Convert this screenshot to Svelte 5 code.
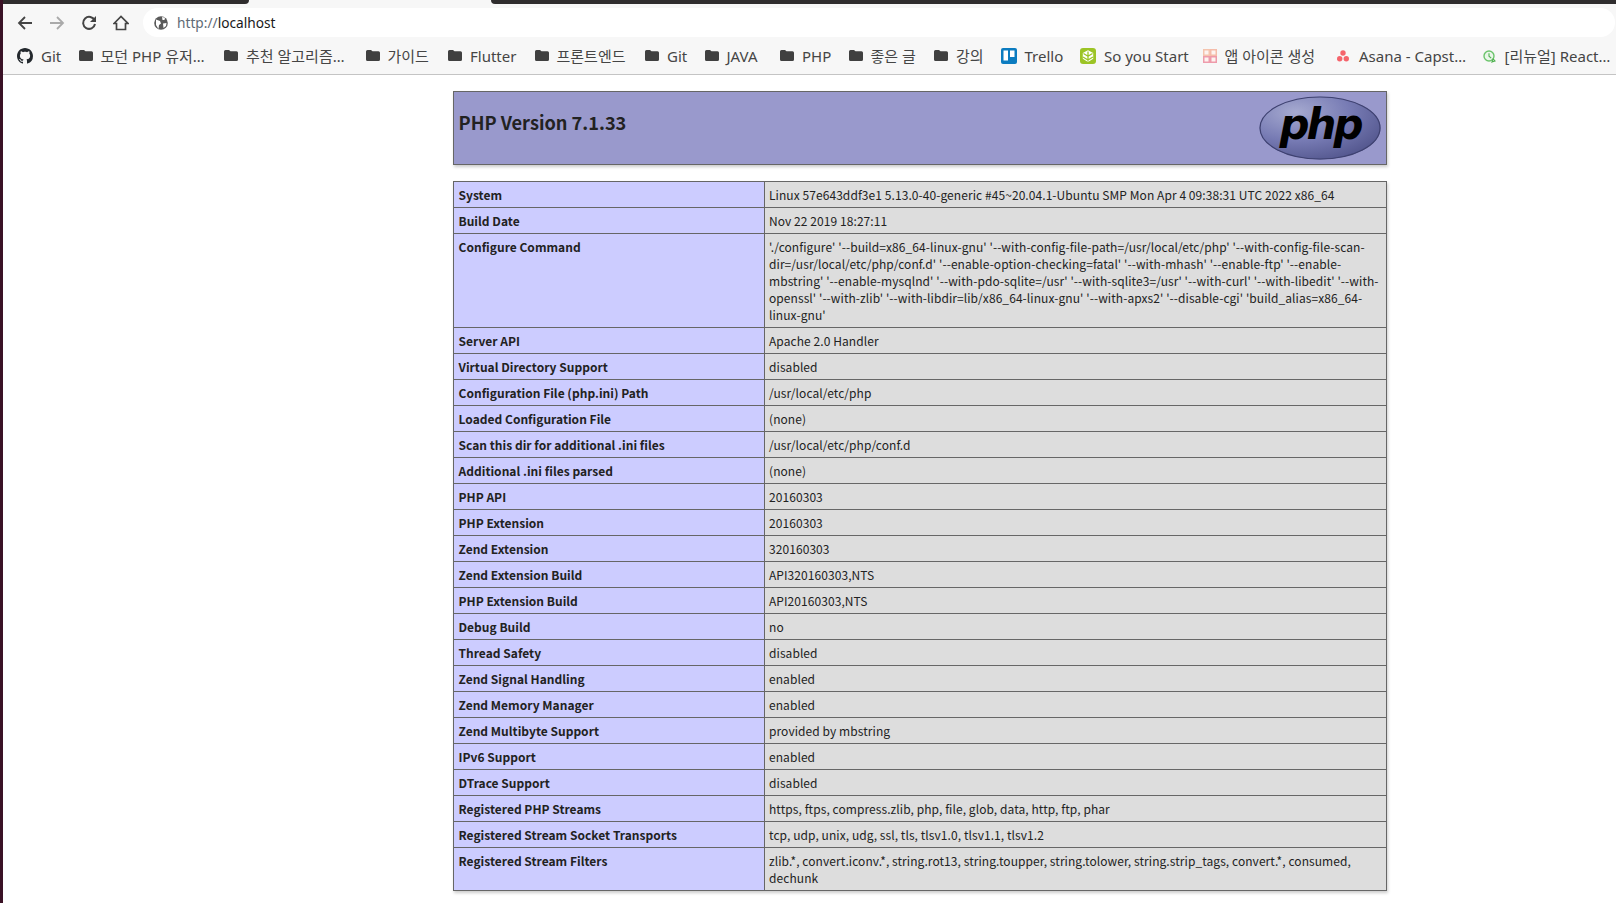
<script>
  const rows = [
    ['System', 'Linux 57e643ddf3e1 5.13.0-40-generic #45~20.04.1-Ubuntu SMP Mon Apr 4 09:38:31 UTC 2022 x86_64'],
    ['Build Date', 'Nov 22 2019 18:27:11'],
    ['Configure Command', "'./configure' '--build=x86_64-linux-gnu' '--with-config-file-path=/usr/local/etc/php' '--with-config-file-scan-dir=/usr/local/etc/php/conf.d' '--enable-option-checking=fatal' '--with-mhash' '--enable-ftp' '--enable-mbstring' '--enable-mysqlnd' '--with-pdo-sqlite=/usr' '--with-sqlite3=/usr' '--with-curl' '--with-libedit' '--with-openssl' '--with-zlib' '--with-libdir=lib/x86_64-linux-gnu' '--with-apxs2' '--disable-cgi' 'build_alias=x86_64-linux-gnu'"],
    ['Server API', 'Apache 2.0 Handler'],
    ['Virtual Directory Support', 'disabled'],
    ['Configuration File (php.ini) Path', '/usr/local/etc/php'],
    ['Loaded Configuration File', '(none)'],
    ['Scan this dir for additional .ini files', '/usr/local/etc/php/conf.d'],
    ['Additional .ini files parsed', '(none)'],
    ['PHP API', '20160303'],
    ['PHP Extension', '20160303'],
    ['Zend Extension', '320160303'],
    ['Zend Extension Build', 'API320160303,NTS'],
    ['PHP Extension Build', 'API20160303,NTS'],
    ['Debug Build', 'no'],
    ['Thread Safety', 'disabled'],
    ['Zend Signal Handling', 'enabled'],
    ['Zend Memory Manager', 'enabled'],
    ['Zend Multibyte Support', 'provided by mbstring'],
    ['IPv6 Support', 'enabled'],
    ['DTrace Support', 'disabled'],
    ['Registered PHP Streams', 'https, ftps, compress.zlib, php, file, glob, data, http, ftp, phar'],
    ['Registered Stream Socket Transports', 'tcp, udp, unix, udg, ssl, tls, tlsv1.0, tlsv1.1, tlsv1.2'],
    ['Registered Stream Filters', 'zlib.*, convert.iconv.*, string.rot13, string.toupper, string.tolower, string.strip_tags, convert.*, consumed, dechunk'],
  ];
  const bookmarks = [
    ['git', 'Git', 20], ['f', '모던 PHP 유저…', 106], ['f', '추천 알고리즘…', 102], ['f', '가이드', 43], ['f', 'Flutter', 47],
    ['f', '프론트엔드', 71], ['f', 'Git', 20], ['f', 'JAVA', 36], ['f', 'PHP', 29], ['f', '좋은 글', 46], ['f', '강의', 27],
    ['trello', 'Trello', 38], ['sys', 'So you Start', 81], ['grid', '앱 아이콘 생성', 93], ['asana', 'Asana - Capst…', 104], ['clock', '[리뉴얼] React…', 108],
  ];
</script>

<div class="window">
  <div class="tabstrip"><div class="tab-left"></div><div class="tab-active"></div><div class="tab-right"></div></div>
  <div class="toolbar">
    <div class="nav">
      <svg viewBox="0 0 16 16" width="16" height="16"><path d="M15 8H2M8 2 2 8l6 6" fill="none" stroke="#444" stroke-width="1.8"/></svg>
      <svg viewBox="0 0 16 16" width="16" height="16"><path d="M1 8h13M8 2l6 6-6 6" fill="none" stroke="#aaa" stroke-width="1.8"/></svg>
      <svg viewBox="0 0 16 16" width="16" height="16"><path d="M13.6 5.400A6 6 0 1 0 14 9" fill="none" stroke="#444" stroke-width="2"/><path d="M15 1v6H9z" fill="#444"/></svg>
      <svg viewBox="0 0 16 16" width="16" height="16"><path d="M1 8.500 8 1.500l7 7h-2.500v6h-9v-6z" fill="none" stroke="#444" stroke-width="1.700" stroke-linejoin="miter"/></svg>
    </div>
    <div class="omni">
      <svg viewBox="0 0 14 14" width="14" height="14"><circle cx="7" cy="7" r="6.800" fill="#5a5a5a"/><path d="M2 3.500 6 5l1 2.500-2 1.500-.5 4L2 9zM8 1l3 .7L10.500 4 8.500 4zM9 7.500l3.500-.5-.5 3-2.500 2z" fill="#fff"/></svg>
      <span class="url"><span class="scheme">http://</span>localhost</span>
    </div>
  </div>
  <div class="bookmarks">
    {#each bookmarks as [icon, label, w]}
      <div class="bm">
        {#if icon === 'f'}
          <svg viewBox="0 0 14 11" width="14" height="11"><path d="M0 1.500A1.500 1.500 0 0 1 1.500 0H5l1.500 1.200h6A1.500 1.500 0 0 1 14 2.700v6.800a1.500 1.500 0 0 1-1.500 1.500h-11A1.500 1.500 0 0 1 0 9.500z" fill="#404040"/></svg>
        {:else if icon === 'git'}
          <svg viewBox="0 0 16 16" width="16" height="16"><path fill="#24292e" d="M8 0C3.580 0 0 3.580 0 8c0 3.540 2.290 6.530 5.470 7.590.4.070.55-.17.55-.38 0-.19-.01-.82-.01-1.490-2.010.37-2.530-.49-2.690-.94-.09-.23-.48-.94-.82-1.130-.28-.15-.68-.52-.01-.53.63-.01 1.080.58 1.230.82.720 1.210 1.870.87 2.330.66.070-.52.280-.87.510-1.070-1.780-.2-3.640-.89-3.640-3.950 0-.87.310-1.590.820-2.150-.08-.2-.36-1.020.08-2.120 0 0 .67-.21 2.200.82.640-.18 1.320-.27 2-.27s1.360.090 2 .27c1.530-1.040 2.200-.82 2.200-.82.44 1.100.16 1.920.08 2.120.51.560.82 1.270.82 2.150 0 3.070-1.870 3.750-3.650 3.950.29.250.54.730.54 1.480 0 1.070-.01 1.930-.01 2.200 0 .21.150.46.550.38A8.010 8.010 0 0 0 16 8c0-4.420-3.580-8-8-8z"/></svg>
        {:else if icon === 'trello'}
          <svg viewBox="0 0 16 16" width="16" height="16"><rect width="16" height="16" rx="2" fill="#0c7cc0"/><rect x="2.500" y="2.500" width="4.500" height="10" fill="#fff"/><rect x="9" y="2.500" width="4.500" height="6.500" fill="#fff"/></svg>
        {:else if icon === 'sys'}
          <svg viewBox="0 0 16 16" width="16" height="16"><rect width="16" height="16" rx="3" fill="#9cc425"/><path d="M8 2.200 13.200 5v5.800L8 14 2.800 10.800V5z" fill="#fff"/><path d="M8 3.500v10M3.500 5.500 8 8.200l4.500-2.700M3 9l5 3 5-3" fill="none" stroke="#9cc425" stroke-width="1.300"/></svg>
        {:else if icon === 'grid'}
          <svg viewBox="0 0 14 14" width="14" height="14"><g fill="#fdf3f0" stroke-width="1.500"><rect x=".75" y=".75" width="5.500" height="5.500" stroke="#f5c4ae"/><rect x="7.750" y=".75" width="5.500" height="5.500" stroke="#f5bcaa"/><rect x=".75" y="7.750" width="5.500" height="5.500" stroke="#ee9cac"/><rect x="7.750" y="7.750" width="5.500" height="5.500" stroke="#ee9aaa"/></g></svg>
        {:else if icon === 'asana'}
          <svg viewBox="0 0 16 16" width="16" height="16"><g fill="#f5646c"><circle cx="8" cy="5" r="2.700"/><circle cx="4.700" cy="10.700" r="2.700"/><circle cx="11.300" cy="10.700" r="2.700"/></g></svg>
        {:else}
          <svg viewBox="0 0 16 16" width="16" height="16"><circle cx="8" cy="8" r="5" fill="#e9f6e9" stroke="#6cc46c" stroke-width="1.400"/><path d="M8 5.200v3l2.200 2M11 14l3-1-1.800-2z" fill="none" stroke="#4fb14f" stroke-width="1.100"/></svg>
        {/if}
        <span class="label" style="width:{w}px">{label}</span>
      </div>
    {/each}
  </div>
  <main>
    <table class="head">
      <tbody>
        <tr><td class="h">
          <svg class="logo" viewBox="0 0 122 64" width="122" height="64">
            <defs>
              <radialGradient id="lg" cx="0.3" cy="0.25" r="0.9"><stop offset="0" stop-color="#a6aad0"/><stop offset="0.5" stop-color="#777bb4"/><stop offset="1" stop-color="#4c4f86"/></radialGradient>
            </defs>
            <ellipse cx="61" cy="32" rx="60.500" ry="31.500" fill="url(#lg)"/>
            <ellipse cx="61" cy="32" rx="60" ry="31" fill="none" stroke="#3e4170" stroke-width="1.200"/>
            <text x="61" y="43" text-anchor="middle" class="logotext">php</text>
          </svg>
          <h1>PHP Version 7.1.33</h1>
        </td></tr>
      </tbody>
    </table>
    <table class="info">
      <tbody>
        {#each rows as [k, v]}
          <tr><td class="e">{k}</td><td class="v">{v}</td></tr>
        {/each}
      </tbody>
    </table>
  </main>
</div>

<style>
  :global(body) { margin: 0; background: #fff; overflow: hidden; }
  .window { height: 903px; overflow: hidden; border-left: 3px solid #3a1226; box-sizing: border-box; font-family: "Noto Sans", sans-serif; }
  .tabstrip { display: flex; height: 4px; background: #f7f7f7; }
  .tab-left { width: 246px; background: #2f2d2e; border-bottom-right-radius: 5px; }
  .tab-active { width: 242px; }
  .tab-right { flex: 1; background: #2f2d2e; border-bottom-left-radius: 5px; }
  .toolbar { display: flex; align-items: center; height: 37px; box-sizing: border-box; background: #f7f7f7; padding: 4px 1px 4px 0; }
  .nav { display: flex; align-items: center; gap: 16px; padding-left: 14px; width: 140px; box-sizing: border-box; }
  .omni { flex: 1; display: flex; align-items: center; height: 29px; background: #fff; border-radius: 15px; padding-left: 11px; gap: 9px; }
  .url { font-size: 13.700px; color: #1a1a1a; }
  .scheme { color: #5f6b76; }
  .bookmarks { display: flex; align-items: center; height: 29px; background: #f7f7f7; border-bottom: 1px solid #c4c4c4; padding: 0 0 4px 14px; gap: 17.500px; overflow: hidden; white-space: nowrap; font-family: "Noto Sans", "Noto Sans CJK KR", sans-serif; font-size: 15px; color: #454545; }
  .bm { display: flex; align-items: center; gap: 8px; flex: none; }
  .label { display: block; }
  main { padding: 16px 0 0 450px; font-family: "Noto Sans CJK KR", sans-serif; color: #222; }
  table { border-collapse: collapse; border: 0; width: 934px; box-shadow: 1px 2px 3px #ccc; text-align: left; }
  .head { margin-bottom: 16px; }
  td { border: 1px solid #666; font-size: 12px; line-height: 17px; vertical-align: baseline; padding: 4px 5px 4px 4.500px; }
  .h { background: #99c; font-weight: 700; }
  .e { background: #ccf; width: 300px; font-weight: 700; letter-spacing: 0.020px; }
  .v { background: #ddd; max-width: 300px; overflow-wrap: break-word; letter-spacing: 0.070px; }
  h1 { font-size: 18.200px; margin: 13px 0 11px; line-height: 26px; font-weight: 700; }
  .logo { float: right; }
  .logotext { font-family: "DejaVu Sans", sans-serif; font-style: italic; font-weight: 700; font-size: 42px; fill: #000; letter-spacing: -3px; }
</style>
